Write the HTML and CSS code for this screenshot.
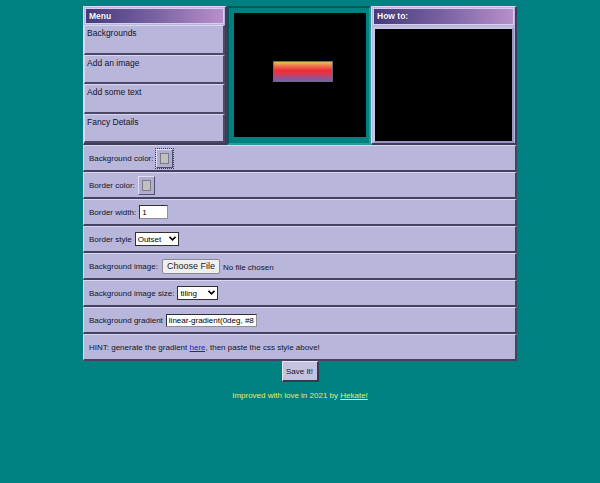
FILE: index.html
```html
<!DOCTYPE html>
<html>
<head>
<meta charset="utf-8">
<title>Editor</title>
<link rel="stylesheet" href="styles.css">
</head>
<body>
<div class="app">
  <div class="top">
    <div class="menu">
      <div class="title">Menu</div>
      <div class="item">Backgrounds</div>
      <div class="item">Add an image</div>
      <div class="item">Add some text</div>
      <div class="item">Fancy Details</div>
    </div>
    <div class="preview">
      <div class="canvas"><div class="sample"></div></div>
    </div>
    <div class="howto">
      <div class="title">How to:</div>
      <div class="screen"></div>
    </div>
  </div>
  <div class="form">
    <div class="row"><span>Background color:</span><input type="color" class="color focused" value="#c0c0c0"></div>
    <div class="row"><span>Border color:</span><input type="color" class="color" value="#c0c0c0"></div>
    <div class="row"><span>Border width:</span><input type="text" class="num" value="1"></div>
    <div class="row"><span>Border style</span><span class="selwrap"><select class="sel style"><option>Outset</option></select><svg class="chev" width="7" height="5" viewBox="0 0 7 5"><path d="M0.5 0.8 L3.5 3.8 L6.5 0.8" fill="none" stroke="#000" stroke-width="1.6"/></svg></span></div>
    <div class="row"><span>Background image:</span><input type="file" class="file"></div>
    <div class="row"><span>Background image size:</span><span class="selwrap"><select class="sel size"><option>tiling</option></select><svg class="chev" width="7" height="5" viewBox="0 0 7 5"><path d="M0.5 0.8 L3.5 3.8 L6.5 0.8" fill="none" stroke="#000" stroke-width="1.6"/></svg></span></div>
    <div class="row"><span>Background gradient</span><input type="text" class="grad" value="linear-gradient(0deg, #8c4fa0 0%, #e8283c 50%, #f0b860 100%)"></div>
    <div class="row"><span>HINT: generate the gradient <a href="#">here,</a> then paste the css style above!</span></div>
  </div>
</div>
<div class="save-wrap"><button class="save">Save It!</button></div>
<p class="footer">Improved with love in 2021 by <a href="#">Hekate!</a></p>
</body>
</html>
```
FILE: styles.css
```css
html, body {
  margin: 0;
  padding: 0;
}
body {
  background: #008080;
  font-family: "Liberation Sans", Arial, sans-serif;
  font-size: 8px;
  color: #14141f;
}
.app {
  width: 434px;
  margin: 6px auto 0;
}
.top {
  display: grid;
  grid-template-columns: 144px 144px 146px;
  height: 139px;
}
.menu, .howto {
  display: flex;
  flex-direction: column;
  box-sizing: border-box;
  background: #b9b6dc;
  border-style: solid;
  border-width: 1px 2px 2px 1px;
  border-color: #d8d6f0 #3e3c58 #3e3c58 #d8d6f0;
}
.title {
  height: 16px;
  margin: 1px;
  box-sizing: border-box;
  border: 1px solid #d4d0ee;
  background: linear-gradient(to right, #463a7c 0%, #7a62a2 50%, #b78fca 100%);
  color: #fff;
  font-weight: bold;
  font-size: 8.5px;
  line-height: 14px;
  padding-left: 3px;
  text-shadow: 0 0 1px #2a2050;
}
.item {
  flex: 1;
  box-sizing: border-box;
  border-style: solid;
  border-width: 1px 2px 2px 1px;
  border-color: #d8d6f0 #4a4866 #4a4866 #d8d6f0;
  padding: 2px 2px 0;
  line-height: 10px;
  font-size: 8.5px;
}
.preview {
  box-sizing: border-box;
  border-style: solid;
  border-width: 2px;
  border-color: #005a5a #2a9a9a #2a9a9a #005a5a;
  padding: 5px 3px 6px 5px;
  background: #008080;
}
.canvas {
  width: 132px;
  height: 124px;
  background: #000;
  display: flex;
  align-items: center;
  justify-content: center;
}
.sample {
  width: 60px;
  height: 21px;
  margin: 0 0 7px 6px;
  box-sizing: border-box;
  border: 1px solid #6a6a7a;
  background: linear-gradient(to bottom, #e8c060 0%, #f07048 22%, #ec2c3c 45%, #e03848 60%, #a04c88 80%, #7a62aa 100%);
}
.howto .title {
  height: 17px;
  line-height: 15px;
}
.screen {
  flex: 1;
  margin: 1px 1px 0;
  background: #000;
  border: 2px solid #a9a5d2;
  border-color: #c8c4e6 #9894c4 #9894c4 #c8c4e6;
}
.form {
  display: flex;
  flex-direction: column;
}
.row {
  height: 27px;
  box-sizing: border-box;
  display: flex;
  align-items: center;
  gap: 3px;
  padding-left: 5px;
  background: #b9b6dc;
  border-style: solid;
  border-width: 1px 2px 2px 1px;
  border-color: #d8d6f0 #44425e #44425e #d8d6f0;
}
.row a {
  color: #2222cc;
}
.color {
  -webkit-appearance: none;
  appearance: none;
  width: 17px;
  height: 19px;
  padding: 3px;
  margin: 0;
  box-sizing: border-box;
  background: #b0aed0;
  border: 1px solid #505070;
  border-color: #e0def4 #505070 #505070 #e0def4;
}
.color::-webkit-color-swatch-wrapper {
  padding: 0;
}
.color::-webkit-color-swatch {
  border: 1px solid #7a7a8a;
}
.color.focused {
  outline: 1px dotted #2030b0;
  outline-offset: 0;
}
.num, .grad {
  height: 14px;
  box-sizing: border-box;
  margin: 0;
  padding: 0 2px;
  font-family: "Liberation Sans", Arial, sans-serif;
  font-size: 8px;
  background: #fff;
  border: 1px solid #404040;
  border-color: #303030 #909090 #909090 #303030;
  color: #000;
}
.num {
  width: 29px;
}
.grad {
  width: 91px;
  height: 13px;
}
.selwrap {
  position: relative;
  display: inline-flex;
}
.sel {
  -webkit-appearance: none;
  appearance: none;
  height: 14px;
  box-sizing: border-box;
  margin: 0;
  padding: 0 12px 0 2px;
  font-family: "Liberation Sans", Arial, sans-serif;
  font-size: 8px;
  background: #fff;
  color: #000;
  border: 1px solid #303030;
  border-radius: 0;
}
.chev {
  position: absolute;
  right: 3px;
  top: 4px;
  pointer-events: none;
}
.sel.style {
  width: 44px;
}
.sel.size {
  width: 41px;
}
.file {
  font-family: "Liberation Sans", Arial, sans-serif;
  font-size: 8px;
  color: #14141f;
  margin-left: 1px;
}
.file::file-selector-button {
  font-family: "Liberation Sans", Arial, sans-serif;
  font-size: 9px;
  height: 15px;
  padding: 0 4px;
  margin-right: 3px;
  background: #efefef;
  color: #222;
  border: 1px solid #8a8a8a;
  border-radius: 2px;
}
.save-wrap {
  text-align: center;
  height: 22px;
}
.save {
  width: 37px;
  height: 21px;
  margin: 0;
  padding: 0;
  font-family: "Liberation Sans", Arial, sans-serif;
  font-size: 8px;
  color: #14141f;
  background: #c4c2e0;
  border-style: solid;
  border-width: 1px 2px 2px 1px;
  border-color: #e8e6f6 #3a3850 #3a3850 #e8e6f6;
}
.footer {
  margin: 8px 0 0;
  text-align: center;
  line-height: 10px;
  color: #e4f060;
}
.footer a {
  color: #e4f060;
}
```
